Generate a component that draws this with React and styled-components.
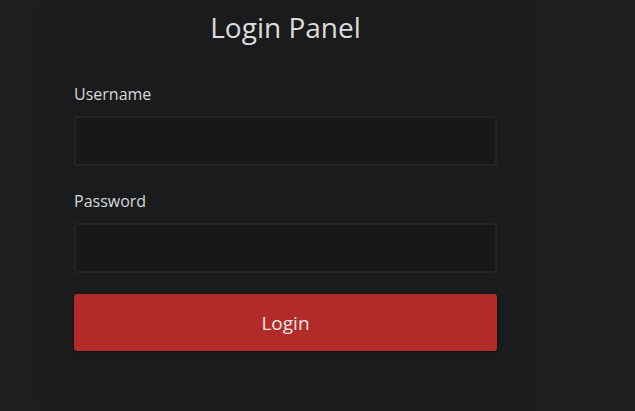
import React from 'react'
import styled, { createGlobalStyle } from 'styled-components'

const GlobalStyle = createGlobalStyle`
	html, body {
		margin: 0;
		padding: 0;
		background: #1d1f21;
	}
	body {
		font-family: "Open Sans", "Noto Sans", sans-serif;
		color: #d6d6d6;
	}
`

const Page = styled.div`
	width: 635px;
	height: 411px;
	overflow: hidden;
	background: #1d1f21;
`

const Panel = styled.div`
	width: 495px;
	height: 411px;
	margin-left: 40px;
	padding: 7px 38px 0 34px;
	box-sizing: border-box;
	background: #1a1b1d;
	box-shadow: 0 0 12px rgba(0, 0, 0, 0.15);
`

const Title = styled.h2`
	margin: 0 0 36px;
	font-size: 28px;
	font-weight: 400;
	line-height: 40px;
	text-align: center;
	color: #dcdcdc;
`

const Field = styled.div`
	display: flex;
	flex-direction: column;
	margin-bottom: ${props => props.$space || 24}px;
`

const Label = styled.label`
	font-size: 16px;
	line-height: 22px;
	margin-bottom: 11px;
	color: #d8d8d8;
`

const Input = styled.input`
	height: 50px;
	box-sizing: border-box;
	background: #17181a;
	border: 2px solid #232426;
	border-radius: 3px;
	color: #ddd;
	font: inherit;
	padding: 0 12px;
	outline: none;
`

const Button = styled.button`
	width: 100%;
	height: 57px;
	border: none;
	border-radius: 3px;
	background: #b22a29;
	color: #f2e6e6;
	font-family: inherit;
	font-size: 19px;
	cursor: pointer;
	box-shadow: 0 1px 3px rgba(0, 0, 0, 0.3);
`

const App = () => (
	<Page>
		<GlobalStyle />
		<Panel>
			<Title>Login Panel</Title>
			<Field $space={24}>
				<Label htmlFor="username">Username</Label>
				<Input id="username" type="text" />
			</Field>
			<Field $space={21}>
				<Label htmlFor="password">Password</Label>
				<Input id="password" type="password" />
			</Field>
			<Button>Login</Button>
		</Panel>
	</Page>
)

export default App
